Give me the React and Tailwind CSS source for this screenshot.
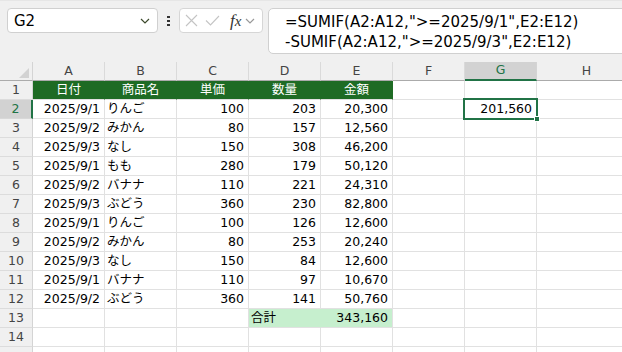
import React from "react";

const cols = ["A", "B", "C", "D", "E", "F", "G", "H"];

const data = [
  ["2025/9/1", "りんご", "100", "203", "20,300"],
  ["2025/9/2", "みかん", "80", "157", "12,560"],
  ["2025/9/3", "なし", "150", "308", "46,200"],
  ["2025/9/1", "もも", "280", "179", "50,120"],
  ["2025/9/2", "バナナ", "110", "221", "24,310"],
  ["2025/9/3", "ぶどう", "360", "230", "82,800"],
  ["2025/9/1", "りんご", "100", "126", "12,600"],
  ["2025/9/2", "みかん", "80", "253", "20,240"],
  ["2025/9/3", "なし", "150", "84", "12,600"],
  ["2025/9/1", "バナナ", "110", "97", "10,670"],
  ["2025/9/2", "ぶどう", "360", "141", "50,760"],
];

const heads = ["日付", "商品名", "単価", "数量", "金額"];

const Chevron = ({ className }) => (
  <svg width="10" height="6" viewBox="0 0 10 6" className={className}>
    <path d="M1 1 L5 5 L9 1" fill="none" stroke="currentColor" strokeWidth="1.2" />
  </svg>
);

const RowHead = ({ n, active }) => (
  <div
    className={
      active
        ? "w-[33px] h-[19px] shrink-0 flex items-center justify-center bg-[#d2d2d2] text-[#217346] border-r-2 border-r-[#217346] border-b border-b-[#d8d8d8]"
        : "w-[33px] h-[19px] shrink-0 flex items-center justify-center bg-[#f0f0f0] text-[#444] border-r border-r-[#d4d4d4] border-b border-b-[#dcdcdc]"
    }
  >
    {n}
  </div>
);

const Cell = ({ children, right, w = "w-[72px]" }) => (
  <div
    className={`${w} h-[19px] shrink-0 flex items-center border-r border-b border-[#e1e1e1] overflow-hidden whitespace-nowrap ${
      right ? "justify-end pr-[4px]" : "pl-[2px]"
    }`}
  >
    {children}
  </div>
);

export default function App() {
  return (
    <div className="w-[622px] h-[352px] overflow-hidden bg-white font-['DejaVu_Sans','Noto_Sans_CJK_JP',sans-serif] text-[12.5px] text-black">
      {/* formula bar */}
      <div className="h-[62px] bg-[#f0f0f0] border-t border-[#e6e6e6] flex items-start pt-[7px] pl-[7px]">
        <div className="w-[151px] h-[25px] bg-white border border-[#d0d0d0] rounded-[4px] flex items-center pl-[6px] pr-[7px] text-[15px]">
          <span className="flex-1 pt-[1px]">G2</span>
          <Chevron className="text-[#3d4a2d]" />
        </div>
        <div className="ml-[9px] mt-[8px] flex flex-col gap-[2px]">
          <div className="w-[3px] h-[2px] bg-[#333]" />
          <div className="w-[3px] h-[2px] bg-[#333]" />
          <div className="w-[3px] h-[2px] bg-[#333]" />
        </div>
        <div className="ml-[9px] w-[84px] h-[25px] bg-white border border-[#d6d6d6] rounded-[4px] flex items-center pl-[5px] gap-[7px]">
          <svg width="13" height="13" viewBox="0 0 13 13">
            <path d="M1 1 L12 12 M12 1 L1 12" stroke="#c4c4c4" strokeWidth="1.1" />
          </svg>
          <svg width="15" height="11" viewBox="0 0 15 11">
            <path d="M1 5.5 L5.5 10 L14 1" fill="none" stroke="#c4c4c4" strokeWidth="1.1" />
          </svg>
          <span className="ml-[3px] font-['Liberation_Serif',serif] italic text-[17px] leading-none text-[#333]">
            f<span className="text-[15px]">x</span>
          </span>
          <Chevron className="text-[#999] -ml-[3px]" />
        </div>
        <div className="ml-[5px] flex-1 h-[46px] -mr-[6px] bg-white border border-[#d0d0d0] rounded-l-[5px] pl-[16px] pt-[3px] text-[15px] leading-[20px]">
          <div>=SUMIF(A2:A12,"&gt;=2025/9/1",E2:E12)</div>
          <div>-SUMIF(A2:A12,"&gt;=2025/9/3",E2:E12)</div>
        </div>
      </div>

      {/* column headers */}
      <div className="flex h-[19px] bg-[#f0f0f0] text-[#444]">
        <div className="relative w-[33px] h-[19px] shrink-0 border-r border-r-[#d4d4d4] border-b border-b-[#ababab]">
          <svg width="10" height="10" viewBox="0 0 10 10" className="absolute right-[3px] bottom-[2px]">
            <path d="M10 0 L10 10 L0 10 Z" fill="#d2d2d2" />
          </svg>
        </div>
        {cols.map((c) =>
          c === "G" ? (
            <div
              key={c}
              className="w-[72px] h-[19px] shrink-0 flex items-center justify-center bg-[#d2d2d2] text-[#217346] border-r border-r-[#d4d4d4] border-b-2 border-b-[#217346]"
            >
              {c}
            </div>
          ) : (
            <div
              key={c}
              className={`${c === "H" ? "w-[100px]" : "w-[72px]"} h-[19px] shrink-0 flex items-center justify-center border-r border-r-[#dadada] border-b border-b-[#ababab]`}
            >
              {c}
            </div>
          )
        )}
      </div>

      {/* row 1 */}
      <div className="flex">
        <RowHead n={1} />
        {heads.map((h) => (
          <div
            key={h}
            className="w-[72px] h-[19px] shrink-0 flex items-center justify-center bg-[#1e6b24] text-white border-r border-r-[#1e6b24] border-b border-b-[#e1e1e1]"
          >
            {h}
          </div>
        ))}
        <Cell />
        <Cell />
        <Cell w="w-[100px]" />
      </div>

      {/* data rows */}
      {data.map((r, i) => (
        <div key={i} className="flex">
          <RowHead n={i + 2} active={i === 0} />
          <Cell right>{r[0]}</Cell>
          <Cell>{r[1]}</Cell>
          <Cell right>{r[2]}</Cell>
          <Cell right>{r[3]}</Cell>
          <Cell right>{r[4]}</Cell>
          <Cell />
          {i === 0 ? (
            <div className="relative w-[72px] h-[19px] shrink-0 flex items-center justify-end pr-[4px] border-r border-b border-[#e1e1e1]">
              201,560
              <div className="absolute left-[-2px] top-[-2px] w-[75px] h-[22px] border-2 border-[#217346]" />
              <div className="absolute right-[-4px] bottom-[-4px] w-[6px] h-[6px] bg-[#217346] border border-white" />
            </div>
          ) : (
            <Cell />
          )}
          <Cell w="w-[100px]" />
        </div>
      ))}

      {/* row 13 */}
      <div className="flex">
        <RowHead n={13} />
        <Cell />
        <Cell />
        <Cell />
        <div className="w-[72px] h-[19px] shrink-0 flex items-center pl-[2px] bg-[#c6efce] border-r border-r-[#c6efce] border-b border-b-[#e1e1e1]">
          合計
        </div>
        <div className="w-[72px] h-[19px] shrink-0 flex items-center justify-end pr-[4px] bg-[#c6efce] border-r border-b border-[#e1e1e1]">
          343,160
        </div>
        <Cell />
        <Cell />
        <Cell w="w-[100px]" />
      </div>

      {[14, null].map((n, k) => (
        <div key={k} className="flex">
          <RowHead n={n} />
          <Cell />
          <Cell />
          <Cell />
          <Cell />
          <Cell />
          <Cell />
          <Cell />
          <Cell w="w-[100px]" />
        </div>
      ))}
    </div>
  );
}
